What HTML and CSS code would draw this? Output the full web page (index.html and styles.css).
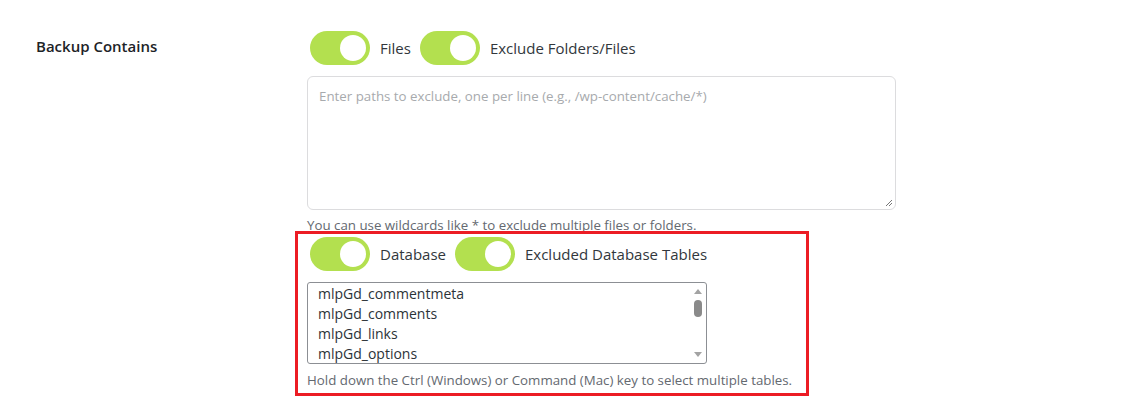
FILE: index.html
```html
<!DOCTYPE html>
<html lang="en">
<head>
<meta charset="utf-8">
<title>Backup Contains</title>
<link rel="stylesheet" href="styles.css">
</head>
<body>
<div class="setting-row">
  <div class="setting-label">Backup Contains</div>
  <div class="setting-field">
    <div class="toggle-row">
      <span class="toggle"><span class="knob"></span></span>
      <span class="toggle-text">Files</span>
      <span class="toggle"><span class="knob"></span></span>
      <span class="toggle-text">Exclude Folders/Files</span>
    </div>
    <div class="textarea-box">
      <span class="placeholder">Enter paths to exclude, one per line (e.g., /wp-content/cache/*)</span>
      <svg class="grip" width="8" height="8" viewBox="0 0 8 8"><path d="M7 1L1 7M7 4L4 7" stroke="#777" stroke-width="1"/></svg>
    </div>
    <p class="help">You can use wildcards like * to exclude multiple files or folders.</p>
    <div class="highlight">
      <div class="toggle-row db-row">
        <span class="toggle"><span class="knob"></span></span>
        <span class="toggle-text">Database</span>
        <span class="toggle"><span class="knob"></span></span>
        <span class="toggle-text">Excluded Database Tables</span>
      </div>
      <div class="listbox">
        <ul class="options">
          <li>mlpGd_commentmeta</li>
          <li>mlpGd_comments</li>
          <li>mlpGd_links</li>
          <li>mlpGd_options</li>
        </ul>
        <div class="scrollbar">
          <span class="arrow up"></span>
          <span class="thumb"></span>
          <span class="arrow down"></span>
        </div>
      </div>
      <p class="help help-db">Hold down the Ctrl (Windows) or Command (Mac) key to select multiple tables.</p>
    </div>
  </div>
</div>
</body>
</html>
```

FILE: styles.css
```css
* { box-sizing: border-box; }
html, body { margin: 0; padding: 0; background: #fff; }
body {
  font-family: "Open Sans", "Noto Sans", "Liberation Sans", sans-serif;
  color: #3c434a;
}
.setting-row {
  display: flex;
  padding-top: 31px;
}
.setting-label {
  width: 307px;
  padding-left: 36px;
  padding-top: 5px;
  font-size: 15px;
  font-weight: 600;
  color: #1d2327;
}
.setting-field {
  display: flex;
  flex-direction: column;
}
.toggle-row {
  display: flex;
  align-items: center;
  height: 34px;
  padding-left: 3px;
}
.toggle {
  position: relative;
  width: 60px;
  height: 34px;
  border-radius: 17px;
  background: #b3e04f;
  flex: none;
}
.knob {
  position: absolute;
  right: 4px;
  top: 4px;
  width: 26px;
  height: 26px;
  border-radius: 50%;
  background: #fff;
}
.toggle-text {
  font-size: 15px;
  color: #32373c;
  margin-left: 10px;
  margin-right: 9px;
}
.textarea-box {
  position: relative;
  margin-top: 11px;
  width: 589px;
  height: 134px;
  border: 1px solid #dcdcde;
  border-radius: 6px;
  padding: 7px 11px;
}
.placeholder {
  font-size: 13.3px;
  color: #a7aaad;
}
.grip {
  position: absolute;
  right: 2px;
  bottom: 2px;
}
.help {
  margin: 6px 0 0 0;
  font-size: 13.3px;
  line-height: 18px;
  color: #646970;
}
.highlight {
  margin-top: -3px;
  margin-left: -12px;
  width: 514px;
  height: 165px;
  border: 3px solid #ec1c24;
  padding: 3px 0 0 9px;
}
.listbox {
  display: flex;
  margin-top: 11px;
  width: 400px;
  height: 82px;
  border: 1px solid #8c8f94;
  border-radius: 3px;
  overflow: hidden;
}
.options {
  list-style: none;
  margin: 0;
  padding: 1px 0 0 10px;
  flex: 1;
  font-size: 14px;
  line-height: 20px;
  color: #2c3338;
}
.scrollbar {
  width: 17px;
  display: flex;
  flex-direction: column;
  align-items: center;
}
.arrow {
  width: 0;
  height: 0;
  border-left: 4px solid transparent;
  border-right: 4px solid transparent;
}
.arrow.up {
  margin-top: 6px;
  border-bottom: 5px solid #a3a3a3;
}
.arrow.down {
  margin-top: auto;
  margin-bottom: 6px;
  border-top: 5px solid #a3a3a3;
}
.thumb {
  margin-top: 6px;
  width: 8px;
  height: 17px;
  border-radius: 4px;
  background: #8a8a8a;
}
.help-db {
  margin-top: 7px;
}
```
